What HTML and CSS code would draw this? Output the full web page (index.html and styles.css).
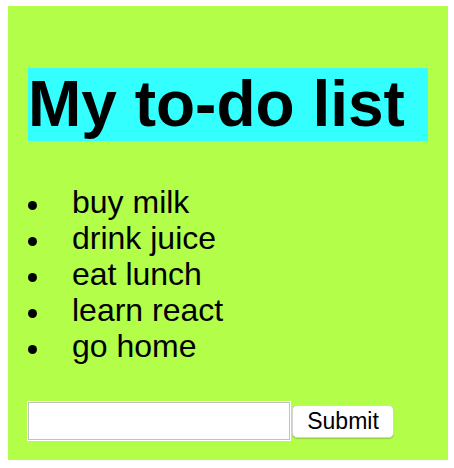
FILE: index.html
```html
<!DOCTYPE html>
<html>
<head>
<meta charset="utf-8">
<title>My to-do list</title>
<link rel="stylesheet" href="styles.css">
</head>
<body>
<div class="app">
  <h1 class="title">My to-do list</h1>
  <ul class="todos">
    <li>buy milk</li>
    <li>drink juice</li>
    <li>eat lunch</li>
    <li>learn react</li>
    <li>go home</li>
  </ul>
  <form class="add-form">
    <input class="add-input" type="text">
    <button class="add-button" type="button">Submit</button>
  </form>
</div>
</body>
</html>
```
FILE: styles.css
```css
html, body {
  background: #ffffff;
}
body {
  margin: 6px 0 0 8px;
  font-family: "Liberation Sans", Arial, Helvetica, sans-serif;
  font-size: 32px;
  color: #000;
}
.app {
  width: 400px;
  padding: 20px;
  background: #b2fe48;
  display: flow-root;
  height: 414px;
}
.title {
  margin: 42px 0 0 0;
  background: #33ffff;
  font-size: 64px;
  font-weight: bold;
  line-height: 73px;
  padding-left: 0;
}
.todos {
  margin: 43px 0 0 0;
  padding-left: 0;
  list-style: none;
}
.todos li {
  line-height: 36px;
  display: flex;
  align-items: center;
}
.todos li::before {
  content: "";
  flex: none;
  width: 9px;
  height: 9px;
  border-radius: 50%;
  background: #000;
  margin: 6px 35px 0 0;
}
.add-form {
  margin-top: 38px;
  display: flex;
  align-items: center;
  gap: 2px;
}
.add-input {
  box-sizing: border-box;
  width: 262px;
  height: 38px;
  margin: 0;
  border: 1px solid #c2c2c2;
  box-shadow: inset 0 0 0 1px #ffffff;
  outline: 1px solid #ffffff;
  outline-offset: 0;
  background: #fff;
  font-family: "Liberation Sans", Arial, sans-serif;
  font-size: 20px;
  padding: 0 4px;
}
.add-button {
  box-sizing: border-box;
  height: 33px;
  width: 102px;
  margin: 0;
  padding: 0;
  background: #ffffff;
  border: 1px solid #d4d4d4;
  border-radius: 5px;
  box-shadow: 0 1px 1px rgba(0, 0, 0, 0.18);
  font-family: "Liberation Sans", Arial, sans-serif;
  font-size: 23px;
  color: #000;
}
```
